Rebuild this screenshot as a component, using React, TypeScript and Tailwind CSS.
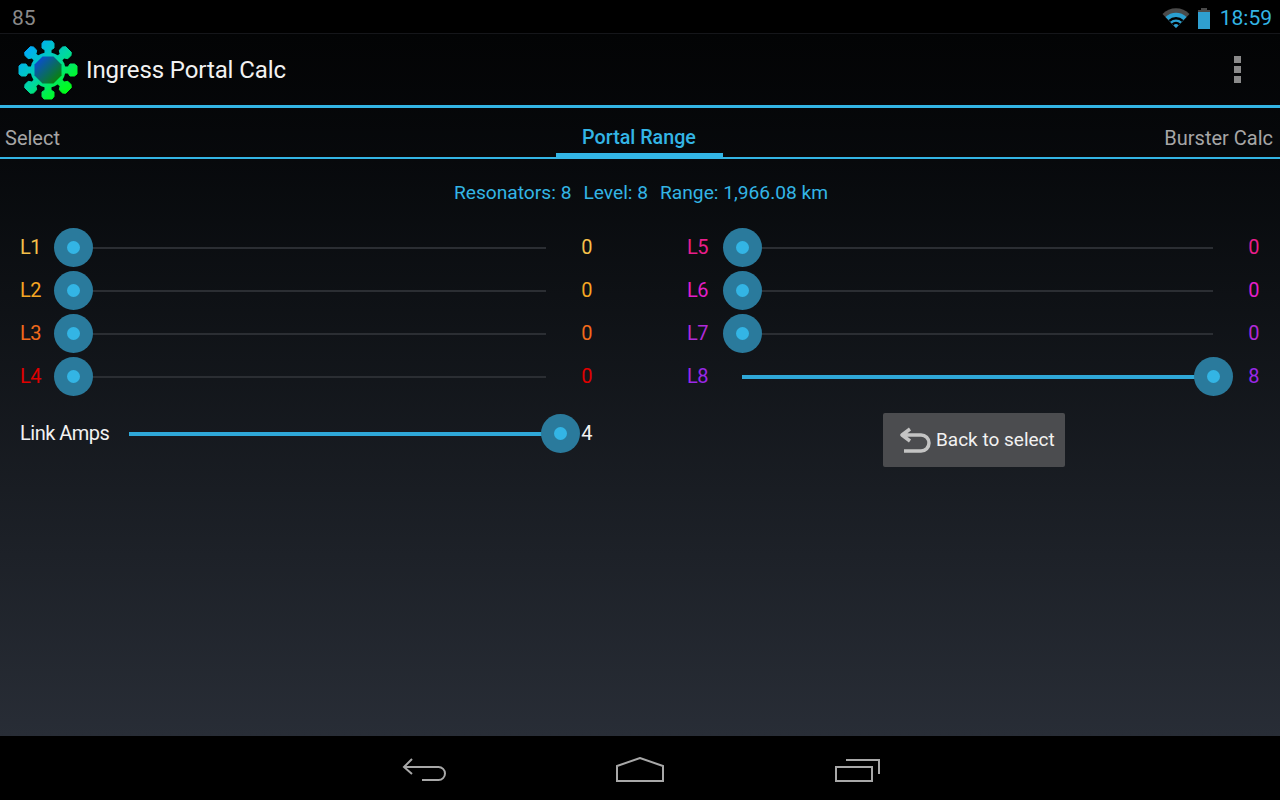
const font = "font-['Roboto',sans-serif]";

const Slider = ({ full, width }: { full?: boolean; width: string }) => {
  return (
    <div className={`relative h-[39px] ${width}`}>
      {full ? (
        <div className="absolute left-[19px] right-[20px] top-[18px] h-[4px] bg-[#2fa8d8]" />
      ) : (
        <div className="absolute left-[19px] right-[20px] top-[19px] h-[2px] bg-[#2b2e33]" />
      )}
      <div
        className={`absolute top-0 w-[39px] h-[39px] rounded-full bg-[#2a7a9c] flex items-center justify-center ${
          full ? "right-0" : "left-0"
        }`}
      >
        <div className="w-[13px] h-[13px] rounded-full bg-[#33b5e5]" />
      </div>
    </div>
  );
};

const Row = ({
  label,
  value,
  color,
  full,
  labelWidth,
  sliderWidth,
}: {
  label: string;
  value: string;
  color: string;
  full?: boolean;
  labelWidth: string;
  sliderWidth: string;
}) => {
  return (
    <div className={`flex items-center h-[43px] text-[20px] tracking-[-0.5px] ${color}`}>
      <div className={`pb-[2px] ${labelWidth}`}>{label}</div>
      <Slider full={full} width={sliderWidth} />
      <div className="pb-[2px] flex-1 text-right">{value}</div>
    </div>
  );
};

// one arm of the logo, pointing up from the centre at (31,31)
const arm: [number, number][] = [
  [-4, -29],
  [4, -29],
  [6, -26.5],
  [6, -22],
  [3, -20],
  [3, -15],
  [-3, -15],
  [-3, -20],
  [-6, -22],
  [-6, -26.5],
];

const armPoints = (deg: number) => {
  const r = (deg * Math.PI) / 180;
  return arm
    .map(([x, y]) => {
      const px = 31 + x * Math.cos(r) - y * Math.sin(r);
      const py = 31 + x * Math.sin(r) + y * Math.cos(r);
      return `${px.toFixed(2)},${py.toFixed(2)}`;
    })
    .join(" ");
};

const Logo = () => {
  const angles = [0, 45, 90, 135, 180, 225, 270, 315];
  return (
    <svg width="62" height="62" viewBox="0 0 62 62">
      <defs>
        <linearGradient id="outer" gradientUnits="userSpaceOnUse" x1="10" y1="8" x2="52" y2="54">
          <stop offset="0" stopColor="#00a8ff" />
          <stop offset="0.5" stopColor="#00d8a0" />
          <stop offset="0.85" stopColor="#00f830" />
          <stop offset="1" stopColor="#00ff10" />
        </linearGradient>
        <linearGradient id="inner" x1="0.15" y1="0.15" x2="0.85" y2="0.85">
          <stop offset="0" stopColor="#0a50c8" />
          <stop offset="1" stopColor="#0a8010" />
        </linearGradient>
      </defs>
      <circle cx="31" cy="31" r="17.5" fill="url(#outer)" />
      {angles.map((a) => (
        <polygon
          key={a}
          points={armPoints(a)}
          fill="url(#outer)"
          stroke="url(#outer)"
          strokeWidth="1"
          strokeLinejoin="round"
        />
      ))}
      <polygon
        points="25.5,17.5 36.5,17.5 44.5,25.5 44.5,36.5 36.5,44.5 25.5,44.5 17.5,36.5 17.5,25.5"
        fill="url(#inner)"
      />
    </svg>
  );
};

const App = () => {
  return (
    <div className={`w-[1280px] h-[800px] flex flex-col overflow-hidden bg-black ${font}`}>
      {/* Status bar */}
      <div className="h-[34px] shrink-0 bg-black border-b border-[#15161a] flex items-center justify-between pt-[4px] pl-3 pr-[8px]">
        <span className="text-[21px] text-[#8a8a8a]">85</span>
        <div className="flex items-center">
          <svg width="28" height="22" viewBox="0 0 28 22" className="mr-[7px]">
            <path d="M0.5 6 A19 19 0 0 1 27.5 6 L14 20 Z" fill="#4a4a4a" />
            <path d="M3.5 9 A15 15 0 0 1 24.5 9 L14 20 Z" fill="#2a9fd0" />
            <path d="M6.5 12 A11 11 0 0 1 21.5 12 L19.8 13.8 A8.5 8.5 0 0 0 8.2 13.8 Z" fill="#000" />
            <path d="M9.8 15.5 A6 6 0 0 1 18.2 15.5 L16.6 17.2 A3.8 3.8 0 0 0 11.4 17.2 Z" fill="#000" />
          </svg>
          <svg width="14" height="22" viewBox="0 0 14 22" className="mr-[9px]">
            <rect x="4" y="0" width="6" height="3" fill="#4a4a4a" />
            <rect x="1" y="2" width="12" height="3" fill="#4a4a4a" />
            <rect x="1" y="4" width="12" height="17" fill="#2f9fd0" />
          </svg>
          <span className="text-[21px] text-[#33b5e5]">18:59</span>
        </div>
      </div>

      <div className="flex-1 flex flex-col bg-gradient-to-b from-[#030405] to-[#282d36]">
        {/* Action bar */}
        <div className="h-[71px] shrink-0 flex items-center pl-[17px] pr-[39px]">
          <Logo />
          <span className="ml-[7px] text-[24px] tracking-[-0.1px] text-[#f2f2f2]">Ingress Portal Calc</span>
          <div className="ml-auto flex flex-col gap-[3px]">
            <div className="w-[7px] h-[7px] bg-[#8a8a8a]" />
            <div className="w-[7px] h-[7px] bg-[#8a8a8a]" />
            <div className="w-[7px] h-[7px] bg-[#8a8a8a]" />
          </div>
        </div>
        <div className="h-[3px] shrink-0 bg-[#33b5e5]" />

        {/* Tabs */}
        <div className="relative h-[51px] shrink-0 flex items-center px-[5px] text-[20px] text-[#a6a6a6] border-b-2 border-[#33b5e5]">
          <span className="flex-1 mt-[10px]">Select</span>
          <span className="mt-[10px] text-[19.7px] text-[#33b5e5] font-medium">Portal Range</span>
          <span className="flex-1 mt-[10px] mr-[2px] text-right">Burster Calc</span>
          <div className="absolute left-[556px] w-[167px] -bottom-[2px] h-[6px] bg-[#33b5e5]" />
        </div>

        {/* Summary */}
        <div className="mt-[21px] pl-[2px] flex justify-center gap-[12px] text-[19.2px] leading-[26px] text-[#33b5e5]">
          <span>Resonators: 8</span>
          <span>Level: 8</span>
          <span>Range: 1,966.08 km</span>
        </div>

        {/* Sliders */}
        <div className="mt-[20px] pl-5 pr-[21px] grid grid-cols-[572px_572px] justify-between">
          <div>
            <Row label="L1" value="0" color="text-[#f5c04a]" labelWidth="w-[34px]" sliderWidth="w-[512px]" />
            <Row label="L2" value="0" color="text-[#f5a623]" labelWidth="w-[34px]" sliderWidth="w-[512px]" />
            <Row label="L3" value="0" color="text-[#f26a1b]" labelWidth="w-[34px]" sliderWidth="w-[512px]" />
            <Row label="L4" value="0" color="text-[#e00000]" labelWidth="w-[34px]" sliderWidth="w-[512px]" />
            <div className="mt-[14px] flex items-center h-[43px] text-[20px] tracking-[-0.5px] text-[#f2f2f2]">
              <div className="w-[90px] pb-[2px] whitespace-nowrap">Link Amps</div>
              <Slider full width="w-[470px]" />
              <div className="pb-[2px] flex-1 text-right">4</div>
            </div>
          </div>
          <div>
            <Row label="L5" value="0" color="text-[#e91e8c]" labelWidth="w-[36px]" sliderWidth="w-[510px]" />
            <Row label="L6" value="0" color="text-[#e31ec8]" labelWidth="w-[36px]" sliderWidth="w-[510px]" />
            <Row label="L7" value="0" color="text-[#b02ad8]" labelWidth="w-[36px]" sliderWidth="w-[510px]" />
            <Row label="L8" value="8" color="text-[#9a28e8]" labelWidth="w-[36px]" sliderWidth="w-[510px]" full />
            <button className="mt-[15px] ml-[196px] w-[182px] h-[54px] bg-[#4b4c4f] rounded-[2px] flex items-center pl-[17px] text-[19px] text-[#f2f2f2]">
              <svg width="32" height="28" viewBox="0 0 32 28" className="mr-[4px]">
                <path
                  d="M10 3 L2 9 L10 15 M3 9 H21 A8 8 0 0 1 21 25 H4"
                  fill="none"
                  stroke="#c4c4c4"
                  strokeWidth="3.5"
                  strokeLinejoin="round"
                />
              </svg>
              Back to select
            </button>
          </div>
        </div>
      </div>

      {/* Nav bar */}
      <div className="h-[64px] shrink-0 bg-black flex items-center justify-center gap-[170px] pt-[4px]">
        <svg width="46" height="26" viewBox="0 0 46 26" fill="none" stroke="#a8a8a8" strokeWidth="2">
          <path d="M12 2 L4 10 L12 17 M4 10 H38.5 A6.5 6.5 0 0 1 38.5 23 H22" />
        </svg>
        <svg width="48" height="26" viewBox="0 0 48 26" fill="none" stroke="#a8a8a8" strokeWidth="2">
          <path d="M1 24 V9 L24 1 L47 9 V24 Z" />
        </svg>
        <svg width="46" height="26" viewBox="0 0 46 26" fill="none" stroke="#a8a8a8" strokeWidth="2">
          <path d="M2 10 H38 V24 H2 Z M12 3 H45 V17" />
        </svg>
      </div>
    </div>
  );
};

export default App;
